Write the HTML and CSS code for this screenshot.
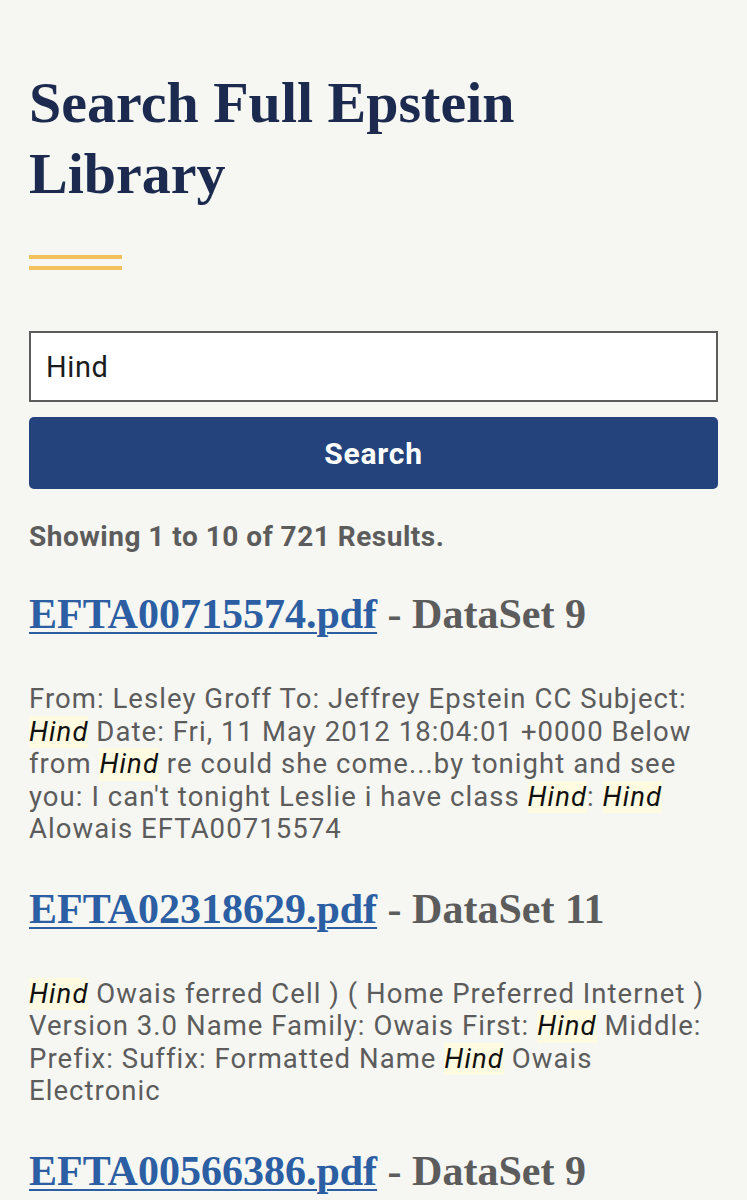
FILE: index.html
```html
<!DOCTYPE html>
<html lang="en">
<head>
<meta charset="utf-8">
<title>Search Full Epstein Library</title>
<link rel="stylesheet" href="styles.css">
</head>
<body>
<main class="page">
  <h1 class="title">Search Full Epstein Library</h1>
  <div class="rule"><span></span><span></span></div>
  <form class="search">
    <input class="search-input" type="text" value="Hind">
    <button class="search-btn" type="button">Search</button>
  </form>
  <p class="count">Showing 1 to 10 of 721 Results.</p>
  <section class="results">
    <article class="result">
      <h2 class="result-title"><a href="#">EFTA00715574.pdf</a> - DataSet 9</h2>
      <p class="snippet">From: Lesley Groff To: Jeffrey Epstein CC Subject: <mark>Hind</mark> Date: Fri, 11 May 2012 18:04:01 +0000 Below from <mark>Hind</mark> re could she come...by tonight and see you: I can't tonight Leslie i have class <mark>Hind</mark>: <mark>Hind</mark> Alowais EFTA00715574</p>
    </article>
    <article class="result">
      <h2 class="result-title"><a href="#">EFTA02318629.pdf</a> - DataSet 11</h2>
      <p class="snippet"><mark>Hind</mark> Owais ferred Cell ) ( Home Preferred Internet ) Version 3.0 Name Family: Owais First: <mark>Hind</mark> Middle: Prefix: Suffix: Formatted Name <mark>Hind</mark> Owais Electronic</p>
    </article>
    <article class="result">
      <h2 class="result-title"><a href="#">EFTA00566386.pdf</a> - DataSet 9</h2>
    </article>
  </section>
</main>
</body>
</html>
```
FILE: styles.css
```css
html, body {
  margin: 0;
  padding: 0;
  background: #f6f6f2;
}
body {
  font-family: Roboto, "Liberation Sans", sans-serif;
  color: #5c5c5c;
}
.page {
  padding: 67px 29px 0 29px;
}
.title {
  margin: 0;
  font-family: "Liberation Serif", serif;
  font-weight: 700;
  font-size: 58px;
  line-height: 71px;
  color: #1b2a4e;
}
.rule {
  display: flex;
  flex-direction: column;
  gap: 7px;
  margin-top: 46px;
  width: 93px;
}
.rule span {
  display: block;
  height: 4px;
  background: #f2c05c;
}
.search {
  margin: 61px 0 0 0;
  display: flex;
  flex-direction: column;
  gap: 15px;
}
.search-input {
  box-sizing: border-box;
  height: 71px;
  width: 100%;
  margin: 0;
  border: 2px solid #5c5c5c;
  background: #fff;
  padding: 0 15px;
  font-family: Roboto, "Liberation Sans", sans-serif;
  font-size: 29px;
  letter-spacing: 0.6px;
  color: #1b1b1b;
  border-radius: 0;
}
.search-btn {
  height: 72px;
  width: 100%;
  margin: 0;
  border: 0;
  border-radius: 5px;
  background: #24437c;
  color: #fff;
  font-family: Roboto, "Liberation Sans", sans-serif;
  font-weight: 700;
  font-size: 30px;
  letter-spacing: 0.8px;
}
.count {
  margin: 31px 0 0 0;
  font-size: 28px;
  line-height: 33px;
  font-weight: 700;
  letter-spacing: 0.5px;
  color: #5c5c5c;
}
.results {
  margin-top: 36px;
}
.result-title {
  margin: 0 0 44px 0;
  font-family: "Liberation Serif", serif;
  font-weight: 700;
  font-size: 42px;
  line-height: 50px;
  color: #5c5c5c;
}
.result-title a {
  color: #2b5ea3;
  text-decoration: underline;
  text-decoration-thickness: 2px;
  text-underline-offset: 4px;
}
.snippet {
  margin: 0 0 38px 0;
  font-size: 27.5px;
  line-height: 32.5px;
  letter-spacing: 1.05px;
  color: #5c5c5c;
}
.snippet mark {
  display: inline-block;
  line-height: 32.5px;
  background: #fffbe0;
  color: #111;
  font-style: italic;
}
```
